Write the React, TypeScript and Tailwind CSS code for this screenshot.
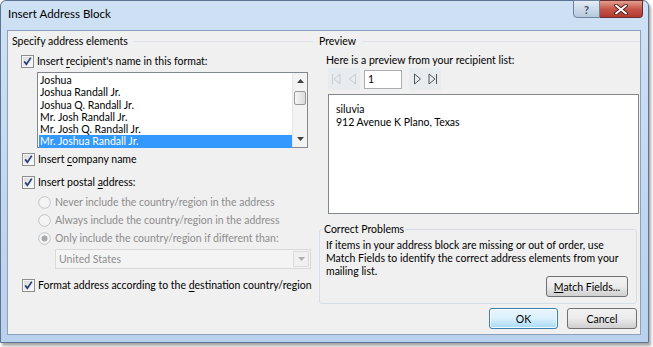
import React from "react";

const Check = () => (
  <svg width="13" height="13" viewBox="0 0 13 13" className="shrink-0">
    <defs>
      <linearGradient id="cbg" x1="0" y1="0" x2="1" y2="1">
        <stop offset="0" stopColor="#d9dadb" />
        <stop offset="1" stopColor="#fbfbfb" />
      </linearGradient>
    </defs>
    <rect x="0.5" y="0.5" width="12" height="12" fill="#f6f6f6" stroke="#8e8f8f" />
    <rect x="2" y="2" width="9" height="9" fill="url(#cbg)" />
    <path d="M3.2 6.4 L5.4 9.2 L9.8 2.6" fill="none" stroke="#2a3e78" strokeWidth="1.7" />
  </svg>
);

const Radio = ({ on }: { on?: boolean }) => (
  <svg width="13" height="13" viewBox="0 0 13 13" className="shrink-0">
    <circle cx="6.5" cy="6.5" r="5.8" fill="#f4f4f4" stroke="#c2c4c6" />
    {on && <circle cx="6.5" cy="6.5" r="3" fill="#a7a9ab" />}
  </svg>
);

const CheckRow = ({ children, className = "" }: { children: React.ReactNode; className?: string }) => (
  <div className={`flex items-center gap-[3px] h-[14px] ${className}`}>
    <Check />
    <span className="leading-[14px] whitespace-nowrap">{children}</span>
  </div>
);

const RadioRow = ({ children, on, className = "" }: { children: React.ReactNode; on?: boolean; className?: string }) => (
  <div className={`flex items-center gap-[4px] h-[14px] ${className}`}>
    <Radio on={on} />
    <span className="leading-[14px] whitespace-nowrap text-[#8d8d8d]">{children}</span>
  </div>
);

const GroupHeader = ({ title }: { title: string }) => (
  <div className="flex items-center h-[14px]">
    <span className="leading-[14px]">{title}</span>
    <div className="flex-1 h-px bg-[#dde5ec] ml-[6px]" />
  </div>
);

const items = [
  "Joshua",
  "Joshua Randall Jr.",
  "Joshua Q. Randall Jr.",
  "Mr. Josh Randall Jr.",
  "Mr. Josh Q. Randall Jr.",
  "Mr. Joshua Randall Jr.",
];

const NavBtn = ({ children }: { children: React.ReactNode }) => (
  <div className="w-[16px] h-[22px] flex items-center justify-center">{children}</div>
);

export default function App() {
  return (
    <div className="w-[653px] h-[347px] bg-white overflow-hidden font-['Lato','Noto_Sans',sans-serif] text-[10.5px] text-black">
      <div className="w-[649px] h-[343px] rounded-t-[6px] border border-[#5b7493] bg-gradient-to-b from-[#cfe1f4] to-[#b9d1ec] flex flex-col shadow-[2px_3px_3px_rgba(0,0,0,0.35)]">
        {/* title bar */}
        <div className="h-[29px] flex items-start shrink-0">
          <div className="pl-[7px] pt-[5px] leading-[16px] text-[11.5px] text-black">Insert Address Block</div>
          <div className="flex-1" />
          <div className="flex mr-[5px] -mt-px">
            <div className="w-[27px] h-[18px] rounded-bl-[4px] border border-[#6f83a0] bg-gradient-to-b from-[#e4ecf5] to-[#b7c8dc] flex items-center justify-center text-[11px] font-bold text-[#3a4d68] leading-none">
              ?
            </div>
            <div className="w-[43px] h-[18px] rounded-br-[4px] border border-l-0 border-[#6a2e2e] bg-gradient-to-b from-[#e0a090] via-[#c8554a] to-[#b23a30] flex items-center justify-center">
              <svg width="14" height="11" viewBox="0 0 14 11">
                <path d="M2 1.5 L12 9.5 M12 1.5 L2 9.5" stroke="#4b1c18" strokeWidth="3.6" strokeLinecap="round" />
                <path d="M2 1.5 L12 9.5 M12 1.5 L2 9.5" stroke="#ffffff" strokeWidth="2" strokeLinecap="round" />
              </svg>
            </div>
          </div>
        </div>
        {/* client */}
        <div className="flex-1 ml-[6px] mr-[7px] mb-[7px] border border-[#8aa2be] bg-[#f0f0f0] flex">
          {/* left column */}
          <div className="w-[305px] shrink-0 pl-[4px] pt-[3px]">
            <GroupHeader title="Specify address elements" />
            <CheckRow className="mt-[6px] ml-[9px]">
              Insert <u className="underline-offset-2">r</u>ecipient's name in this format:
            </CheckRow>
            <div className="mt-[4px] ml-[25px] w-[271px] h-[76px] border border-[#828790] bg-white flex">
              <div className="flex-1 pt-[1px] pl-[1px]">
                {items.map((t, i) => (
                  <div
                    key={t}
                    className={`h-[12.3px] leading-[12px] pl-[1px] ${i === items.length - 1 ? "bg-[#3399ff] text-white" : ""}`}
                  >
                    {t}
                  </div>
                ))}
              </div>
              <div className="w-[15px] bg-[#f3f3f3] border-l border-[#e6e6e6] flex flex-col items-center">
                <svg width="7" height="4" viewBox="0 0 7 4" className="mt-[6px]">
                  <path d="M0 4 L3.5 0 L7 4 Z" fill="#404040" />
                </svg>
                <div className="mt-[8px] w-[12px] h-[14px] rounded-[2px] border border-[#9b9b9b] bg-gradient-to-r from-[#f5f5f5] to-[#dcdcdc]" />
                <div className="flex-1" />
                <svg width="7" height="4" viewBox="0 0 7 4" className="mb-[6px]">
                  <path d="M0 0 L7 0 L3.5 4 Z" fill="#404040" />
                </svg>
              </div>
            </div>
            <CheckRow className="mt-[4px] ml-[10px]">
              Insert <u className="underline-offset-2">c</u>ompany name
            </CheckRow>
            <CheckRow className="mt-[9px] ml-[10px]">
              Insert postal <u className="underline-offset-2">a</u>ddress:
            </CheckRow>
            <RadioRow className="mt-[6px] ml-[26px]">Never include the country/region in the address</RadioRow>
            <RadioRow className="mt-[4px] ml-[26px]">Always include the country/region in the address</RadioRow>
            <RadioRow on className="mt-[4px] ml-[26px]">
              Only include the country/region if different than:
            </RadioRow>
            <div className="mt-[4px] ml-[43px] w-[256px] h-[20px] border border-[#d9d9d9] bg-[#f4f4f4] flex items-center">
              <span className="flex-1 pl-[3px] text-[#8d8d8d] leading-[14px]">United States</span>
              <div className="w-[16px] h-[16px] mr-px border border-[#dcdcdc] bg-[#f0f0f0] flex items-center justify-center">
                <svg width="7" height="4" viewBox="0 0 7 4">
                  <path d="M0 0 L7 0 L3.5 4 Z" fill="#b0b0b0" />
                </svg>
              </div>
            </div>
            <CheckRow className="mt-[9px] ml-[10px]">
              Format address according to the <u className="underline-offset-2">d</u>estination country/region
            </CheckRow>
          </div>
          {/* right column */}
          <div className="flex-1 pl-[6px] pt-[3px] flex flex-col">
            <GroupHeader title="Preview" />
            <div className="mt-[5px] ml-[7px] leading-[14px]">Here is a preview from your recipient list:</div>
            <div className="mt-[1px] ml-[9px] flex items-center h-[22px]">
              <div className="flex bg-[#e9ecef]">
                <NavBtn>
                  <svg width="10" height="12" viewBox="0 0 10 12">
                    <path d="M1.5 1 V11" stroke="#c4ccd4" />
                    <path d="M9 1 L3 6 L9 11 Z" fill="none" stroke="#c4ccd4" />
                  </svg>
                </NavBtn>
                <NavBtn>
                  <svg width="9" height="12" viewBox="0 0 9 12">
                    <path d="M7.5 1 L1.5 6 L7.5 11 Z" fill="none" stroke="#c4ccd4" />
                  </svg>
                </NavBtn>
              </div>
              <div className="ml-[4px] w-[38px] h-[19px] border border-[#abadb3] bg-white pl-[3px] leading-[17px]">1</div>
              <div className="ml-[7px] flex bg-[#e9ecef]">
                <NavBtn>
                  <svg width="9" height="12" viewBox="0 0 9 12">
                    <path d="M1.5 1 L7.5 6 L1.5 11 Z" fill="none" stroke="#4f5560" />
                  </svg>
                </NavBtn>
                <NavBtn>
                  <svg width="10" height="12" viewBox="0 0 10 12">
                    <path d="M1 1 L7 6 L1 11 Z" fill="none" stroke="#4f5560" />
                    <path d="M8.5 1 V11" stroke="#4f5560" />
                  </svg>
                </NavBtn>
              </div>
            </div>
            <div className="mt-[4px] ml-[9px] mr-[1px] h-[120px] border border-[#828790] bg-white pl-[7px] pt-[8px] leading-[13px]">
              <div>siluvia</div>
              <div>912 Avenue K Plano, Texas</div>
            </div>
            <fieldset className="mt-[8px] mr-[3px] h-[82px] border border-[#d5dfe5] rounded-[3px] pl-[6px] pr-[8px] pt-[3px]">
              <legend className="ml-[-3px] px-[1px] leading-[14px]">Correct Problems</legend>
              <div className="leading-[13px]">
                If items in your address block are missing or out of order, use Match Fields to identify the correct address elements from your mailing list.
              </div>
              <div className="flex justify-end mt-[-2px]">
                <button className="w-[82px] h-[21px] rounded-[3px] border border-[#707070] bg-gradient-to-b from-[#f2f2f2] via-[#ebebeb] to-[#cfcfcf] leading-[14px] whitespace-nowrap">
                  <u>M</u>atch Fields...
                </button>
              </div>
            </fieldset>
            <div className="flex justify-end mt-[4px] mr-[3px] gap-[9px]">
              <button className="w-[69px] h-[21px] rounded-[3px] border border-[#3c7fb1] bg-gradient-to-b from-[#eaf6fd] via-[#d9f0fc] to-[#a7d9f5] shadow-[inset_0_0_0_1px_rgba(255,255,255,0.8)] leading-[14px]">
                OK
              </button>
              <button className="w-[70px] h-[21px] rounded-[3px] border border-[#707070] bg-gradient-to-b from-[#f2f2f2] via-[#ebebeb] to-[#cfcfcf] leading-[14px]">
                Cancel
              </button>
            </div>
          </div>
        </div>
      </div>
    </div>
  );
}
